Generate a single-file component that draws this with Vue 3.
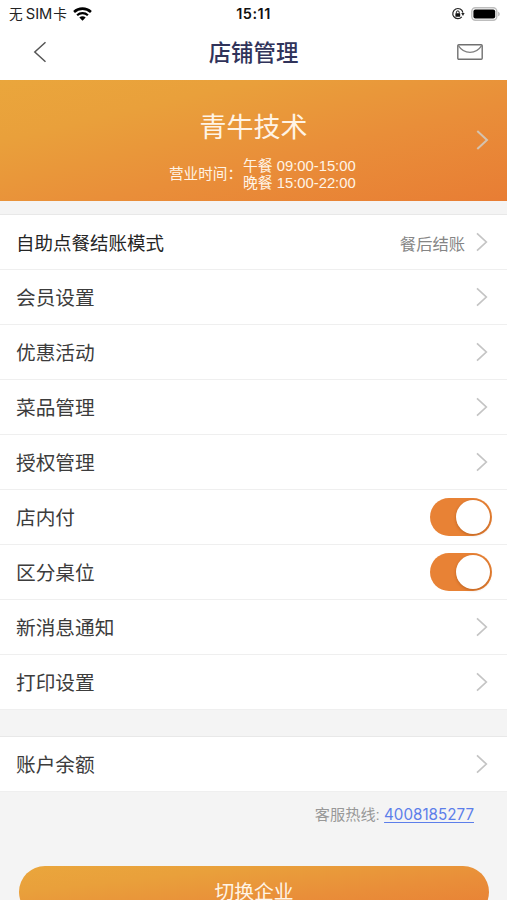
<template>
  <div class="page">
    <div class="status-bar">
      <div class="status-bar__left">
        <span class="status-bar__carrier">无<b>SIM</b>卡</span>
        <svg class="status-bar__wifi" width="19" height="14" viewBox="0 0 18 13" aria-hidden="true">
          <path d="M1 4.6A11.6 11.6 0 0 1 17 4.6" fill="none" stroke="#000" stroke-width="2.4" />
          <path d="M3.9 7.7A7.4 7.4 0 0 1 14.1 7.7" fill="none" stroke="#000" stroke-width="2.1" />
          <path d="M6 9.9A4.3 4.3 0 0 1 12 9.9L9 12.9Z" fill="#000" />
        </svg>
      </div>
      <span class="status-bar__time">15:11</span>
      <div class="status-bar__right">
        <svg width="14" height="14" viewBox="0 0 14 14" aria-hidden="true">
          <path d="M10.8 9.9A5.1 5.1 0 1 1 11.9 5.6" fill="none" stroke="#222" stroke-width="1.2" />
          <path d="M10.2 5.9h3.4L12 9Z" fill="#222" />
          <rect x="4.4" y="6.2" width="4.8" height="3.5" rx=".5" fill="#111" />
          <path d="M5.4 6.4V5.3a1.4 1.4 0 0 1 2.8 0v1.1" fill="none" stroke="#111" stroke-width="1" />
        </svg>
        <svg width="30" height="14" viewBox="0 0 30 14" aria-hidden="true">
          <rect x=".8" y=".8" width="25" height="12.4" rx="3.6" fill="#fff" stroke="#bdbdbd" stroke-width="1.4" />
          <rect x="2.4" y="2.4" width="21.8" height="9.2" rx="2" fill="#000" />
          <path d="M27.2 4.7c2 .6 2 4 0 4.6Z" fill="#b5b5b5" />
        </svg>
      </div>
    </div>

    <header class="nav-bar">
      <svg class="nav-bar__back" width="14" height="22" viewBox="0 0 14 22" aria-hidden="true">
        <path d="M12.5 1.2 1.8 11l10.7 9.8" fill="none" stroke="#555" stroke-width="1.5" />
      </svg>
      <h1 class="nav-bar__title">店铺管理</h1>
      <svg class="nav-bar__mail" width="26" height="16" viewBox="0 0 26 16" aria-hidden="true">
        <rect x=".8" y=".8" width="24.4" height="14.4" rx="1" fill="none" stroke="#707070" stroke-width="1.4" />
        <path d="M1.2 1.4C7 10.6 19 10.6 24.8 1.4" fill="none" stroke="#808080" stroke-width="1.3" />
      </svg>
    </header>

    <section class="shop-card">
      <h2 class="shop-card__name">青牛技术</h2>
      <div class="shop-card__hours">
        <span class="shop-card__label">营业时间：</span>
        <div class="shop-card__times">
          <div v-for="item in openingHours" :key="item">{{ item }}</div>
        </div>
      </div>
      <svg class="shop-card__arrow" width="13" height="20" viewBox="0 0 13 20" aria-hidden="true">
        <path d="M1.3 1 11 10l-9.7 9" fill="none" stroke="#d4c3b0" stroke-width="2" />
      </svg>
    </section>

    <ul v-for="(group, idx) in groups" :key="idx" class="menu">
      <li
        v-for="item in group"
        :key="item.title"
        class="menu-item"
        :class="{ 'menu-item--compact': item.value }"
      >
        <span class="menu-item__title">{{ item.title }}</span>
        <span v-if="item.value" class="menu-item__value">{{ item.value }}</span>
        <button
          v-if="item.toggle"
          class="switch"
          :class="{ 'switch--on': switches[item.toggle] }"
          role="switch"
          :aria-checked="switches[item.toggle]"
          @click="switches[item.toggle] = !switches[item.toggle]"
        >
          <span class="switch__knob"></span>
        </button>
        <svg v-else class="menu-item__arrow" width="12" height="20" viewBox="0 0 12 20" aria-hidden="true">
          <path d="M1 1.3 10.3 10 1 18.7" fill="none" stroke="#c4c4c4" stroke-width="1.7" />
        </svg>
      </li>
    </ul>

    <p class="hotline">客服热线: <a href="tel:4008185277">4008185277</a></p>
    <button class="switch-company">切换企业</button>
  </div>
</template>

<script setup>
import { reactive } from 'vue';

const openingHours = ['午餐 09:00-15:00', '晚餐 15:00-22:00'];

const switches = reactive({ payInStore: true, tables: true });

const groups = [
  [
    { title: '自助点餐结账模式', value: '餐后结账' },
    { title: '会员设置' },
    { title: '优惠活动' },
    { title: '菜品管理' },
    { title: '授权管理' },
    { title: '店内付', toggle: 'payInStore' },
    { title: '区分桌位', toggle: 'tables' },
    { title: '新消息通知' },
    { title: '打印设置' },
  ],
  [{ title: '账户余额' }],
];
</script>

<style>
body {
  margin: 0;
  overflow: hidden;
}
</style>

<style scoped>
.page {
  height: 900px;
  overflow: hidden;
  background: #f4f4f4;
  color: #3c3c3c;
  font-family: "Liberation Sans", "Noto Sans CJK SC", sans-serif;
}

.status-bar {
  display: grid;
  grid-template-columns: 1fr auto 1fr;
  align-items: center;
  height: 27px;
  background: #fff;
}

.status-bar__left,
.status-bar__right {
  display: flex;
  align-items: center;
}

.status-bar__left {
  padding-left: 9px;
  gap: 6px;
}

.status-bar__carrier {
  color: #222;
  font-family: "Noto Sans CJK SC", sans-serif;
  font-size: 13.7px;
  line-height: 26px;
  white-space: nowrap;
}

.status-bar__carrier b {
  margin: 0 1px 0 3px;
  font-family: Inter, sans-serif;
  font-size: 14.7px;
  font-weight: 400;
}

.status-bar__time {
  color: #111;
  font-family: Inter, sans-serif;
  font-size: 14.5px;
  font-weight: 600;
  letter-spacing: 0.5px;
}

.status-bar__right {
  justify-content: flex-end;
  gap: 6px;
  padding-right: 6px;
}

.nav-bar {
  display: flex;
  align-items: center;
  justify-content: space-between;
  height: 53px;
  box-sizing: border-box;
  padding: 0 24px 3px 33px;
  background: #fff;
}

.nav-bar__title {
  margin: 3px 0 0 3px;
  color: #30335a;
  font-size: 22.4px;
  font-weight: 500;
  line-height: 32px;
}

.shop-card {
  position: relative;
  height: 121px;
  box-sizing: border-box;
  padding-top: 28px;
  background: linear-gradient(to bottom right, #eaa63c 0%, #e9a03b 25%, #e98e39 60%, #e87d34 100%);
  color: #fff4e6;
}

.shop-card__name {
  margin: 0;
  font-size: 27px;
  font-weight: 400;
  line-height: 40px;
  text-align: center;
}

.shop-card__hours {
  display: flex;
  align-items: center;
  margin: 10px 0 0 169px;
  font-size: 14.8px;
  line-height: 17px;
}

.shop-card__label {
  width: 74px;
  padding-bottom: 2px;
  font-size: 14.6px;
  white-space: nowrap;
}

.shop-card__arrow {
  position: absolute;
  top: 50px;
  right: 18px;
}

.menu {
  margin: 13px 0 0;
  padding: 0;
  border-top: 1px solid #e8e8e8;
  background: #fff;
  list-style: none;
}

.menu + .menu {
  margin-top: 26px;
}

.menu-item {
  display: flex;
  align-items: center;
  height: 55px;
  box-sizing: border-box;
  padding: 0 15px 0 16px;
  border-bottom: 1px solid #efefef;
}

.menu-item__title {
  flex: 1;
  padding-bottom: 2px;
  font-size: 19.7px;
}

.menu-item--compact .menu-item__title {
  padding-bottom: 0;
  color: #252525;
  font-size: 18.5px;
}

.menu-item__value {
  margin-right: 11px;
  padding-top: 2px;
  color: #858585;
  font-size: 16.3px;
}

.menu-item__arrow {
  margin-right: 4px;
}

.switch {
  width: 62px;
  height: 38px;
  box-sizing: border-box;
  padding: 2px;
  border: 0;
  border-radius: 19px;
  background: #ddd;
}

.switch--on {
  background: #e88235;
}

.switch__knob {
  display: block;
  width: 34px;
  height: 34px;
  border-radius: 50%;
  background: #fff;
  box-shadow: 0 1px 3px rgba(120, 50, 0, 0.4);
}

.switch--on .switch__knob {
  margin-left: auto;
}

.hotline {
  margin: 11px 33px 0 0;
  color: #989898;
  font-size: 15.2px;
  line-height: 24px;
  text-align: right;
}

.hotline a {
  color: #5c7eea;
  font-family: Inter, sans-serif;
  text-underline-offset: 2px;
}

.switch-company {
  display: block;
  width: 470px;
  height: 52px;
  margin: 39px 0 0 19px;
  padding: 0 0 2px;
  border: 0;
  border-radius: 26px;
  background: linear-gradient(to bottom right, #eaa63c 0%, #e9a03b 25%, #e98e39 60%, #e87d34 100%);
  color: #fff4e6;
  font-family: "Noto Sans CJK SC", sans-serif;
  font-size: 19.8px;
  line-height: 24px;
}
</style>
